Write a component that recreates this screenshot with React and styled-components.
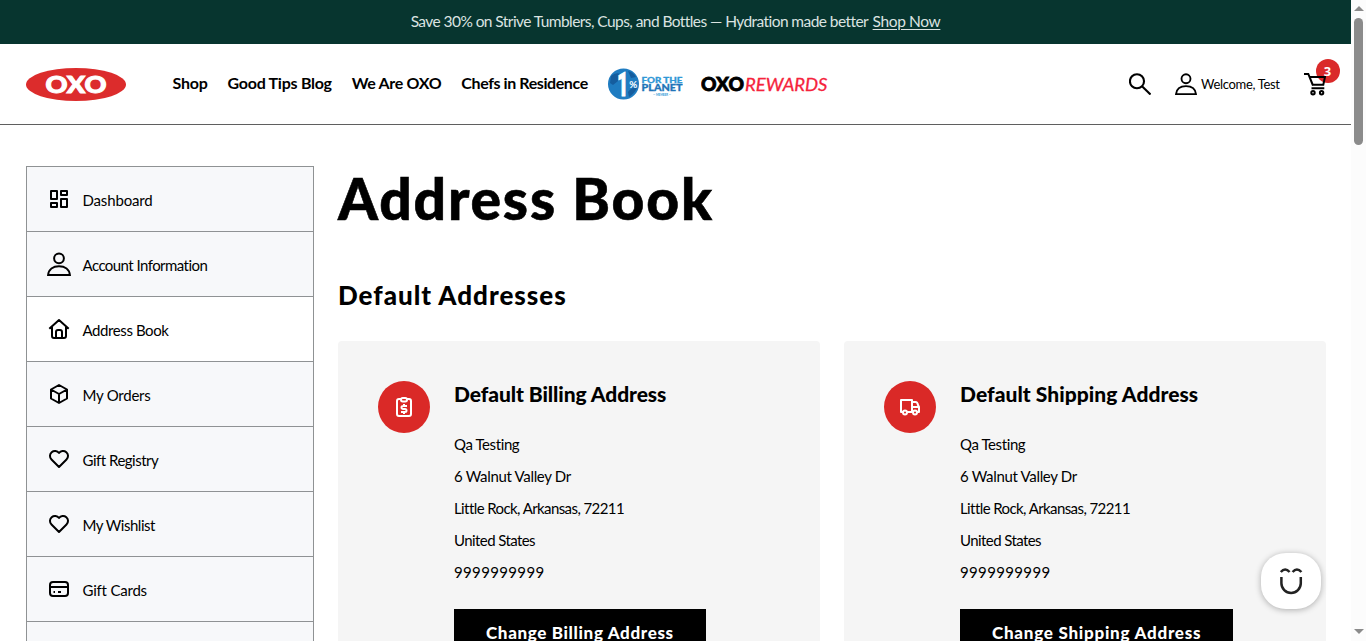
import React from 'react';
import styled, { createGlobalStyle } from 'styled-components';

const GlobalStyle = createGlobalStyle`
  *, *::before, *::after { box-sizing: border-box; }
  body { margin: 0; background: #fff; color: #000; font-family: Lato, "Open Sans", sans-serif; overflow: hidden; }
  h1, h2, h3, p, ul { margin: 0; padding: 0; }
  svg { display: block; flex: none; }
`;

const Window = styled.div`
  display: flex;
  width: 1366px;
  height: 641px;
  overflow: hidden;
`;

const Page = styled.div`
  position: relative;
  width: 1351px;
  height: 641px;
  overflow: hidden;
`;

const T = styled.span`
  letter-spacing: ${(p) => p.$ls || 0}px;
  white-space: nowrap;
`;

const Banner = styled.div`
  display: flex;
  justify-content: center;
  align-items: center;
  gap: 4.5px;
  height: 44px;
  padding-bottom: 2px;
  background: #07352f;
  color: #dbe3e1;
  font-size: 15.5px;
`;

const BannerLink = styled(T)`
  text-decoration: underline;
  text-underline-offset: 2px;
  text-decoration-thickness: 1px;
`;

const Header = styled.header`
  display: flex;
  align-items: center;
  height: 81px;
  padding: 0 25px 0 26px;
  border-bottom: 1px solid #5f5f5f;
`;

const Nav = styled.nav`
  display: flex;
  align-items: center;
  gap: 20px;
  margin-left: 46.5px;
`;

const NavLink = styled(T)`
  padding-bottom: 3px;
  font-size: 16px;
  font-weight: 700;
`;

const Partners = styled.div`
  display: flex;
  align-items: center;
  gap: 18px;
  margin-left: 0.5px;
`;

const Tools = styled.div`
  display: flex;
  align-items: center;
  gap: 24px;
  margin-left: auto;
`;

const Account = styled.div`
  display: flex;
  align-items: center;
  gap: 4px;
  width: 105px;
  font-size: 13px;
`;

const Cart = styled.div`
  position: relative;
  width: 22px;
  height: 24px;
  svg { position: relative; }
`;

const Badge = styled.span`
  position: absolute;
  left: 12px;
  top: -13px;
  width: 24px;
  height: 24px;
  border-radius: 50%;
  background: #da2a2a;
  color: #fff;
  font: 700 13px/24px "Open Sans", sans-serif;
  text-align: center;
  padding-right: 1px;
`;

const Body = styled.div`
  display: flex;
  align-items: flex-start;
  gap: 24px;
  padding: 41px 25px 0 26px;
`;

const Sidebar = styled.div`
  width: 288px;
  flex: none;
  border: 1px solid #8f9294;
`;

const SideItem = styled.div`
  display: flex;
  align-items: center;
  gap: 11.5px;
  height: 65px;
  padding-left: 20px;
  border-bottom: 1px solid #8f9294;
  background: ${(p) => (p.$active ? '#fff' : '#f7f8fa')};
  font-size: 15px;
`;

const SideLabel = styled(T)`
  padding-top: 1px;
`;

const Main = styled.main`
  flex: 1;
`;

const Title = styled.h1`
  font-size: 57px;
  font-weight: 900;
  line-height: 64px;
  letter-spacing: 1.8px;
  -webkit-text-stroke: 0.6px #000;
`;

const Subtitle = styled.h2`
  margin: 50px 0 31px;
  font-size: 26px;
  font-weight: 900;
  line-height: 30px;
  letter-spacing: 0.98px;
`;

const Cards = styled.div`
  display: grid;
  grid-template-columns: 1fr 1fr;
  gap: 24px;
`;

const Card = styled.section`
  display: flex;
  gap: 24px;
  height: 380px;
  padding: 40px;
  border-radius: 4px;
  background: #f5f5f5;
`;

const Round = styled.div`
  display: flex;
  justify-content: center;
  align-items: center;
  flex: none;
  width: 52px;
  height: 52px;
  border-radius: 50%;
  background: #da2927;
`;

const CardTitle = styled.h3`
  margin-bottom: 21px;
  font-size: 21px;
  font-weight: 900;
  line-height: 26px;
  letter-spacing: ${(p) => p.$ls}px;
`;

const Line = styled.p`
  font-size: 15px;
  line-height: 32px;
  letter-spacing: ${(p) => p.$ls}px;
`;

const Button = styled.div`
  width: ${(p) => p.$w}px;
  height: 48px;
  margin-top: 21px;
  padding-left: 32px;
  background: #000;
  color: #fff;
  font-size: 17px;
  font-weight: 900;
  line-height: 48px;
  letter-spacing: ${(p) => p.$ls}px;
  white-space: nowrap;
`;

const Chat = styled.div`
  position: absolute;
  left: 1261px;
  top: 553px;
  width: 60px;
  height: 56px;
  border-radius: 25px / 24px;
  background: #fff;
  box-shadow: 0 1px 6px rgba(0, 0, 0, 0.3);
`;

const Scrollbar = styled.div`
  display: flex;
  flex-direction: column;
  align-items: center;
  width: 15px;
  height: 641px;
  padding: 6px 0 7px;
  background: #fcfcfc;
`;

const Thumb = styled.div`
  width: 9px;
  height: 127px;
  margin: 7px 0 auto;
  border-radius: 5px;
  background: #8b8b8b;
`;

const Icon = ({ size = 24, color = '#000', sw = 2, children }) => (
  <svg width={size} height={size} viewBox="0 0 24 24" fill="none" stroke={color} strokeWidth={sw} strokeLinejoin="round">
    {children}
  </svg>
);

const UserShape = () => (
  <>
    <circle cx="12" cy="6.3" r="4.9" />
    <path d="M1.1 23C1.7 17.4 6 14.3 12 14.3S22.3 17.4 22.9 23z" strokeLinejoin="miter" />
  </>
);

const icons = {
  dashboard: (
    <Icon>
      <path d="M4 4h6v8H4zM14 4h6v4h-6zM4 16h6v4H4zM14 12h6v8h-6z" />
    </Icon>
  ),
  user: (
    <Icon>
      <UserShape />
    </Icon>
  ),
  home: (
    <Icon>
      <path d="M2.3 11.8L12 3l9.7 8.8M5 10v9a2 2 0 0 0 2 2h10a2 2 0 0 0 2-2v-9M9 21v-6a2 2 0 0 1 2-2h2a2 2 0 0 1 2 2v6" />
    </Icon>
  ),
  box: (
    <Icon>
      <path d="M12 3l8 4.5v9L12 21l-8-4.5v-9zM4 7.5l8 4.5 8-4.5M12 12v9" />
    </Icon>
  ),
  heart: (
    <Icon>
      <path d="M19.5 12.57L12 20l-7.5-7.43A5 5 0 1 1 12 6.01a5 5 0 1 1 7.5 6.56" />
    </Icon>
  ),
  card: (
    <Icon>
      <rect x="3" y="5" width="18" height="14" rx="3" />
      <path d="M3 10h18M6.5 15h1.5M11 15h3" />
    </Icon>
  ),
};

const menu = [
  ['dashboard', 'Dashboard', -0.16],
  ['user', 'Account Information', -0.55],
  ['home', 'Address Book', -0.41, true],
  ['box', 'My Orders', -0.25],
  ['heart', 'Gift Registry', -0.5],
  ['heart', 'My Wishlist', -0.48],
  ['card', 'Gift Cards', -0.21],
];

const address = [
  ['Qa Testing', -0.4],
  ['6 Walnut Valley Dr', -0.32],
  ['Little Rock, Arkansas, 72211', -0.59],
  ['United States', -0.58],
  ['9999999999', 0.35],
];

const OxoLogo = () => (
  <svg width="100" height="33" viewBox="0 0 100 33">
    <ellipse cx="50" cy="16.5" rx="50" ry="16.5" fill="#dc2c2c" />
    <text x="19.5" y="24.6" fill="#fff" stroke="#fff" strokeWidth="1" fontSize="22.5" fontWeight="900" textLength="61" lengthAdjust="spacingAndGlyphs">
      OXO
    </text>
  </svg>
);

const PlanetLogo = () => (
  <svg width="75" height="34" viewBox="0 0 75 34">
    <circle cx="15.5" cy="17" r="15.5" fill="#1f7cc1" />
    <path d="M3 9q5-4 9-2l-2 7-5 4-3-2zM20 25q4-5 9-4-3 6-8 9zM20 4q5 1 8 6l-5 1z" fill="#155d9e" />
    <text x="9" y="29" fill="#fff" stroke="#fff" strokeWidth="0.8" fontSize="33" fontWeight="900" fontFamily="Roboto" textLength="11.5" lengthAdjust="spacingAndGlyphs">
      1
    </text>
    <text x="21.3" y="20.5" fill="#fff" fontSize="9" fontWeight="700" textLength="8" lengthAdjust="spacingAndGlyphs">
      %
    </text>
    <text x="33.5" y="15.8" fill="#3198d6" stroke="#3198d6" strokeWidth="0.3" fontSize="8.3" fontWeight="900" textLength="41" lengthAdjust="spacingAndGlyphs">
      FOR THE
    </text>
    <text x="33.5" y="24.2" fill="#1f74b8" stroke="#1f74b8" strokeWidth="0.3" fontSize="9" fontWeight="900" textLength="41" lengthAdjust="spacingAndGlyphs">
      PLANET
    </text>
    <text x="45" y="29.3" fill="#3198d6" fontSize="3" fontWeight="700" textLength="18" lengthAdjust="spacingAndGlyphs">
      — MEMBER —
    </text>
  </svg>
);

const RewardsLogo = () => (
  <svg width="128" height="22" viewBox="0 0 128 22">
    <text x="0" y="17.5" fontSize="18" fontWeight="900" stroke="#000" strokeWidth="0.8" textLength="43" lengthAdjust="spacingAndGlyphs">
      OXO
    </text>
    <text x="44" y="17.5" fill="#f5233c" stroke="#f5233c" strokeWidth="0.3" fontSize="18" fontStyle="italic" textLength="82.5" lengthAdjust="spacingAndGlyphs">
      REWARDS
    </text>
  </svg>
);

const BillingIcon = () => (
  <Icon color="#fff">
    <path d="M9 4H7a2 2 0 0 0-2 2v13a2 2 0 0 0 2 2h10a2 2 0 0 0 2-2V6a2 2 0 0 0-2-2h-2" />
    <rect x="9" y="3" width="6" height="3.5" rx="1.7" />
    <path d="M15 11h-4a1.5 1.5 0 0 0 0 3h2a1.5 1.5 0 0 1 0 3H9M12 9v2M12 17v2" />
  </Icon>
);

const ShippingIcon = () => (
  <Icon color="#fff">
    <path d="M5 17H3V5h11v12H9M14 7h3.5q2 0 2.5 3l1 2v5h-2M14 12h7" />
    <circle cx="7" cy="17.5" r="2" />
    <circle cx="17" cy="17.5" r="2" />
  </Icon>
);

const AddressCard = ({ icon, title, titleLs, action, width, ls }) => (
  <Card>
    <Round>{icon}</Round>
    <div>
      <CardTitle $ls={titleLs}>{title}</CardTitle>
      {address.map(([text, spacing]) => (
        <Line key={text} $ls={spacing}>{text}</Line>
      ))}
      <Button $w={width} $ls={ls}>{action}</Button>
    </div>
  </Card>
);

export default function App() {
  return (
    <Window>
      <GlobalStyle />
      <Page>
        <Banner>
          <T $ls={-0.57}>Save 30% on Strive Tumblers, Cups, and Bottles — Hydration made better</T>
          <BannerLink $ls={-0.38}>Shop Now</BannerLink>
        </Banner>
        <Header>
          <OxoLogo />
          <Nav>
            <NavLink $ls={-0.24}>Shop</NavLink>
            <NavLink $ls={-0.26}>Good Tips Blog</NavLink>
            <NavLink $ls={-0.32}>We Are OXO</NavLink>
            <NavLink $ls={-0.41}>Chefs in Residence</NavLink>
            <Partners>
              <PlanetLogo />
              <RewardsLogo />
            </Partners>
          </Nav>
          <Tools>
            <Icon size={22} sw={2.3}>
              <circle cx="8.7" cy="9" r="7.7" />
              <path d="M14.2 14.5L23.5 23.5" />
            </Icon>
            <Account>
              <Icon size={22}>
                <UserShape />
              </Icon>
              <T $ls={-0.32}>Welcome, Test</T>
            </Account>
            <Cart>
              <Badge>3</Badge>
              <svg width="22" height="24" viewBox="0 0 22 24" fill="none" stroke="#000" strokeWidth="2">
                <path d="M0 1.9h4.3l4.7 11.6M5 5h16l-1.7 7.7H8.3M7.5 16.2h12.8" />
                <circle cx="9" cy="20.8" r="1.7" />
                <circle cx="17.6" cy="20.8" r="1.7" />
              </svg>
            </Cart>
          </Tools>
        </Header>
        <Body>
          <Sidebar>
            {menu.map(([icon, label, ls, active]) => (
              <SideItem key={label} $active={active}>
                {icons[icon]}
                <SideLabel $ls={ls}>{label}</SideLabel>
              </SideItem>
            ))}
            <SideItem />
          </Sidebar>
          <Main>
            <Title>Address Book</Title>
            <Subtitle>Default Addresses</Subtitle>
            <Cards>
              <AddressCard icon={<BillingIcon />} title="Default Billing Address" titleLs={-0.08} action="Change Billing Address" width={252} ls={0.65} />
              <AddressCard icon={<ShippingIcon />} title="Default Shipping Address" titleLs={0.05} action="Change Shipping Address" width={273} ls={0.75} />
            </Cards>
          </Main>
        </Body>
        <Chat>
          <svg width="60" height="56" viewBox="0 0 60 56" fill="none" stroke="#222" strokeWidth="2.5">
            <path d="M19.8 19q4.3-5 8.8 0M31.6 19q4.3-5 8.8 0M20.4 24v6.2a9.7 9.7 0 0 0 19.4 0V24" />
          </svg>
        </Chat>
      </Page>
      <Scrollbar>
        <svg width="10" height="5" viewBox="0 0 10 5"><path d="M5 0l5 5H0z" fill="#8b8b8b" /></svg>
        <Thumb />
        <svg width="10" height="5" viewBox="0 0 10 5"><path d="M5 5l5-5H0z" fill="#8b8b8b" /></svg>
      </Scrollbar>
    </Window>
  );
}
